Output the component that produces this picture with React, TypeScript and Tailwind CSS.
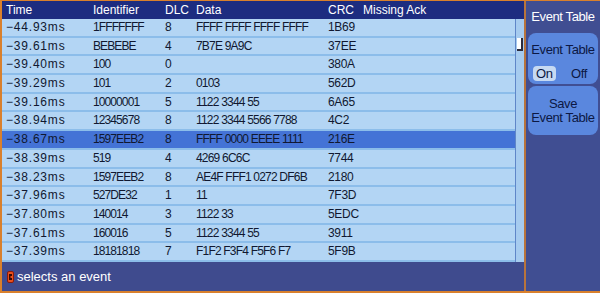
import React from 'react';

interface EventRow {
  time: string;
  id: string;
  dlc: string;
  data: string;
  crc: string;
  ack?: string;
}

const rows: EventRow[] = [
  { time: '−44.93ms', id: '1FFFFFFF', dlc: '8', data: 'FFFF FFFF FFFF FFFF', crc: '1B69' },
  { time: '−39.61ms', id: 'BEBEBE', dlc: '4', data: '7B7E 9A9C', crc: '37EE' },
  { time: '−39.40ms', id: '100', dlc: '0', data: '', crc: '380A' },
  { time: '−39.29ms', id: '101', dlc: '2', data: '0103', crc: '562D' },
  { time: '−39.16ms', id: '10000001', dlc: '5', data: '1122 3344 55', crc: '6A65' },
  { time: '−38.94ms', id: '12345678', dlc: '8', data: '1122 3344 5566 7788', crc: '4C2' },
  { time: '−38.67ms', id: '1597EEB2', dlc: '8', data: 'FFFF 0000 EEEE 1111', crc: '216E' },
  { time: '−38.39ms', id: '519', dlc: '4', data: '4269 6C6C', crc: '7744' },
  { time: '−38.23ms', id: '1597EEB2', dlc: '8', data: 'AE4F FFF1 0272 DF6B', crc: '2180' },
  { time: '−37.96ms', id: '527DE32', dlc: '1', data: '11', crc: '7F3D' },
  { time: '−37.80ms', id: '140014', dlc: '3', data: '1122 33', crc: '5EDC' },
  { time: '−37.61ms', id: '160016', dlc: '5', data: '1122 3344 55', crc: '3911' },
  { time: '−37.39ms', id: '18181818', dlc: '7', data: 'F1F2 F3F4 F5F6 F7', crc: '5F9B' },
];

const SELECTED = 6;

const cols = 'grid grid-cols-[87px_72px_31px_132px_35px_1fr] pl-[4px] whitespace-nowrap';

export default function App() {
  return (
    <div
      className="w-[600px] h-[293px] flex border-t border-l-2 border-b-2 border-[#d9802c] bg-[#404e92] overflow-hidden"
      style={{ fontFamily: '"Liberation Sans", Arial, sans-serif' }}
    >
      {/* Table + status */}
      <div className="w-[522px] flex flex-col">
        <div className={`${cols} h-[18px] bg-[#1d2c80] text-white text-[12px] leading-[18px]`}>
          <span>Time</span>
          <span>Identifier</span>
          <span>DLC</span>
          <span>Data</span>
          <span>CRC</span>
          <span>Missing Ack</span>
        </div>

        <div className="flex h-[243px]">
          <div className="w-[513px] flex flex-col">
            {rows.map((r, i) => (
              <div
                key={i}
                className={`${cols} h-[18.7px] border-b-2 border-[#8cbdea] text-[12px] leading-[17px] text-[#101830] ${
                  i === SELECTED ? 'bg-[#4473d6]' : 'bg-[#b3d5f4]'
                }`}
              >
                <span className="tracking-[0.8px]">{r.time}</span>
                <span className="tracking-[-0.9px]">{r.id}</span>
                <span>{r.dlc}</span>
                <span className="tracking-[-0.8px]">{r.data}</span>
                <span className="tracking-[-0.3px]">{r.crc}</span>
                <span>{r.ack ?? ''}</span>
              </div>
            ))}
          </div>
          {/* Scrollbar */}
          <div className="w-[9px] bg-[#a6cbef] border-l border-[#5f86c8] relative">
            <div className="absolute left-[1px] top-[19px] w-[6px] h-[13px] bg-white border-r-2 border-b-2 border-[#2a2a3a]" />
          </div>
        </div>

        <div className="flex-1 bg-[#3f4b8e] flex items-center gap-[3px] pl-[5px] text-white text-[13px]">
          <svg width="7" height="12" viewBox="0 0 7 12">
            <rect x="0.5" y="0.5" width="6" height="11" rx="1.5" fill="#e8501c" stroke="#8a1a0a" />
            <path d="M2 3h3v2H3.5v2H5v2H2z" fill="#3a0a04" />
          </svg>
          <span>selects an event</span>
        </div>
      </div>

      {/* Divider */}
      <div className="w-[2px] bg-[#b8743c]" />

      {/* Softkey panel */}
      <div className="flex-1 flex flex-col px-[2px] text-[13px] tracking-[-0.4px]">
        <div className="h-[32px] flex items-center justify-center text-white">Event Table</div>
        <div className="h-[51px] rounded-lg bg-[#5a87de] flex flex-col items-center text-[#0c1844]">
          <span className="mt-[7px]">Event Table</span>
          <div className="mt-[4px] w-full flex items-center justify-between px-[5px]">
            <span className="bg-[#c6d9f2] rounded-sm px-[3px] leading-[15px]">On</span>
            <span className="pr-[6px]">Off</span>
          </div>
        </div>
        <div className="mt-[2px] h-[49px] rounded-lg bg-[#5a87de] flex flex-col items-center justify-center leading-[14px] text-[#0c1844]">
          <span>Save</span>
          <span>Event Table</span>
        </div>
      </div>
    </div>
  );
}
